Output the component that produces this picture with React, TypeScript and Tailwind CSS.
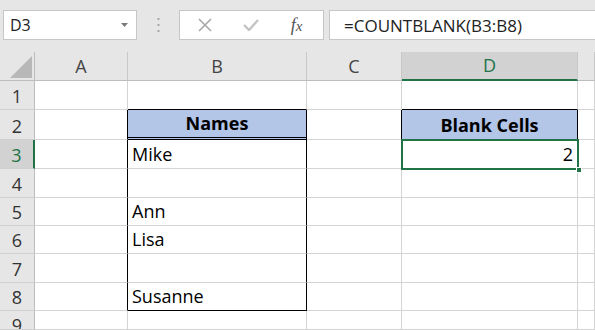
import React from "react";

const COLS = [35, 93, 179, 95, 176, 17];
const ROWS = [29, 30, 29, 29, 28, 28, 29, 28, 19];

type CellSpec = {
  text?: string;
  align?: "left" | "center" | "right";
  bold?: boolean;
  bg?: string;
};

function cellFor(r: number, c: number): { spec: CellSpec; border: string } {
  let br = "border-r-[#d4d4d4]";
  let bb = "border-b-[#d4d4d4]";
  let bbw = "border-b";
  const spec: CellSpec = {};
  if (c === 1 && r >= 2 && r <= 8) br = "border-r-black";
  if (c === 2 && r >= 2 && r <= 8) br = "border-r-black";
  if (c === 2 && r === 1) bb = "border-b-black";
  if (c === 2 && r === 8) bb = "border-b-black";
  if (c === 2 && r === 2) {
    bb = "border-b-black";
    bbw = "border-b-[3px] border-double";
  }
  if (c === 3 && r === 2) br = "border-r-black";
  if (c === 4 && r === 1) bb = "border-b-black";
  if (c === 4 && r === 2) {
    br = "border-r-black";
    bb = "border-b-black";
  }
  if (c === 2 && r === 2) {
    spec.text = "Names";
    spec.bold = true;
    spec.align = "center";
    spec.bg = "bg-[#b4c6e7]";
  }
  if (c === 4 && r === 2) {
    spec.text = "Blank Cells";
    spec.bold = true;
    spec.align = "center";
    spec.bg = "bg-[#b4c6e7]";
  }
  if (c === 2) {
    if (r === 3) spec.text = "Mike";
    if (r === 5) spec.text = "Ann";
    if (r === 6) spec.text = "Lisa";
    if (r === 8) spec.text = "Susanne";
  }
  if (c === 4 && r === 3) {
    spec.text = "2";
    spec.align = "right";
  }
  return { spec, border: `border-r ${br} ${bbw} ${bb}` };
}

export default function App() {
  const colLetters = ["A", "B", "C", "D", ""];
  return (
    <div
      className="w-[595px] h-[330px] overflow-hidden bg-white text-[#000] relative"
      style={{ fontFamily: '"Open Sans", "Noto Sans", sans-serif' }}
    >
      {/* Toolbar */}
      <div className="h-[52px] bg-[#e6e6e6] flex items-start pt-[10px] pl-[3px]">
        <div className="w-[134px] h-[30px] bg-white border border-[#c6c6c6] flex items-center justify-between pl-[6px] pr-[8px]">
          <span className="text-[16px] text-[#222] leading-none">D3</span>
          <svg width="7" height="4" viewBox="0 0 7 4">
            <path d="M0 0 L7 0 L3.5 4 Z" fill="#7a7a7a" />
          </svg>
        </div>
        <div className="w-[42px] h-[30px] flex items-center justify-center">
          <svg width="3" height="14" viewBox="0 0 3 14">
            <rect x="0.5" y="0" width="2" height="2" fill="#a8a8a8" />
            <rect x="0.5" y="6" width="2" height="2" fill="#a8a8a8" />
            <rect x="0.5" y="12" width="2" height="2" fill="#a8a8a8" />
          </svg>
        </div>
        <div className="w-[145px] h-[30px] bg-white border border-[#c6c6c6] flex items-center">
          <div className="w-[48px] flex justify-center pl-[2px]">
            <svg width="14" height="14" viewBox="0 0 14 14">
              <path d="M1 1 L13 13 M13 1 L1 13" stroke="#a8a8a8" strokeWidth="1.6" fill="none" />
            </svg>
          </div>
          <div className="w-[46px] flex justify-center">
            <svg width="16" height="12" viewBox="0 0 16 12">
              <path d="M1 6 L6 11 L15 1" stroke="#c4c4c4" strokeWidth="2.4" fill="none" />
            </svg>
          </div>
          <div className="flex-1 flex justify-center pr-[4px]">
            <span
              className="text-[18px] italic text-[#555] leading-none"
              style={{ fontFamily: '"Liberation Serif", serif' }}
            >
              f<span className="text-[15px]">x</span>
            </span>
          </div>
        </div>
        <div className="ml-[5px] flex-1 h-[30px] bg-white border border-[#c6c6c6] border-r-0 flex items-center pl-[14px]">
          <span className="text-[17px] text-[#222] leading-none">=COUNTBLANK(B3:B8)</span>
        </div>
      </div>

      {/* Grid */}
      <div
        className="grid"
        style={{
          gridTemplateColumns: COLS.map((w) => `${w}px`).join(" "),
          gridTemplateRows: `29px ${ROWS.map((h) => `${h}px`).join(" ")}`,
        }}
      >
        <div className="bg-[#e6e6e6] border-r border-b border-[#bdbdbd] flex items-end justify-end pr-[2px] pb-[2px]">
          <svg width="22" height="22" viewBox="0 0 22 22">
            <path d="M22 0 L22 22 L0 22 Z" fill="#b8b8b8" />
          </svg>
        </div>
        {colLetters.map((l, i) => {
          const sel = l === "D";
          return (
            <div
              key={"h" + i}
              className={
                "flex items-center justify-center text-[18px] border-r border-r-[#c8c8c8] " +
                (sel
                  ? "bg-[#d2d2d2] text-[#217346] border-b-2 border-b-[#217346]"
                  : "bg-[#e6e6e6] text-[#444] border-b border-b-[#bdbdbd]")
              }
            >
              {l}
            </div>
          );
        })}
        {ROWS.map((_, ri) => {
          const r = ri + 1;
          const sel = r === 3;
          const last = r === 9;
          return (
            <React.Fragment key={"r" + r}>
              <div
                className={
                  "flex justify-center text-[18px] leading-[24px] overflow-hidden border-b border-b-[#d0d0d0] " +
                  (last ? "items-start pt-[2px] " : "items-end pb-[1px] ") +
                  (sel
                    ? "bg-[#d2d2d2] text-[#217346] border-r-2 border-r-[#217346]"
                    : "bg-[#e6e6e6] text-[#333] border-r border-r-[#bdbdbd]")
                }
              >
                {r}
              </div>
              {[1, 2, 3, 4, 5].map((c) => {
                const { spec, border } = cellFor(r, c);
                return (
                  <div
                    key={c}
                    className={
                      "box-border flex items-end pb-[3px] text-[18px] leading-[22px] overflow-hidden whitespace-nowrap " +
                      border +
                      " " +
                      (spec.bg ?? "bg-white") +
                      " " +
                      (spec.align === "center"
                        ? "justify-center"
                        : spec.align === "right"
                        ? "justify-end pr-[4px]"
                        : "justify-start pl-[4px]") +
                      (spec.bold ? " font-bold" : "")
                    }
                  >
                    {spec.text}
                  </div>
                );
              })}
            </React.Fragment>
          );
        })}
      </div>

      <div className="absolute left-[401px] top-[139px] w-[178px] h-[31px] border-2 border-[#217346] pointer-events-none" />
      <div className="absolute left-[576px] top-[167px] w-[6px] h-[6px] bg-[#217346] border border-white pointer-events-none" />
    </div>
  );
}
